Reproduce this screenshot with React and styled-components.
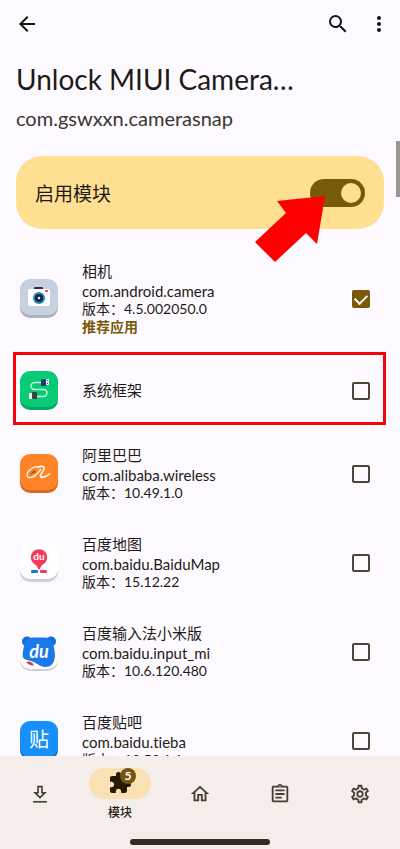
import styled, { createGlobalStyle } from "styled-components";
import {
  MdArrowBack,
  MdExtension,
  MdMoreVert,
  MdOutlineAssignment,
  MdOutlineHome,
  MdOutlineSettings,
  MdSearch,
} from "react-icons/md";

const App = () => {
  return (
    <>
      <GlobalStyle />
      <Screen>
        <TopBar>
          <IconButton aria-label="返回">
            <MdArrowBack />
          </IconButton>
          <Actions>
            <IconButton aria-label="搜索">
              <MdSearch />
            </IconButton>
            <IconButton aria-label="更多">
              <MdMoreVert />
            </IconButton>
          </Actions>
        </TopBar>

        <Heading>
          <Title>Unlock MIUI Camera…</Title>
          <PackageName>com.gswxxn.camerasnap</PackageName>
        </Heading>

        <EnableCard>
          <EnableText>启用模块</EnableText>
          <Toggle type="checkbox" role="switch" defaultChecked />
          <Pointer viewBox="0 0 72 68" aria-hidden="true">
            <path d="M22 6 L70 1 L62 49 L51 38 L20 67 L0 47 L31 18 Z" />
          </Pointer>
        </EnableCard>

        <AppList>
          {apps.map(({ name, id, version, recommended, marked, Icon }) => (
            <Row key={name}>
              <AppIcon viewBox="0 1 40 40" aria-hidden="true">
                <Icon />
              </AppIcon>
              <Info>
                <AppName>{name}</AppName>
                {id && <PackageId>{id}</PackageId>}
                {version && <Detail>版本：{version}</Detail>}
                {recommended && <Recommended>推荐应用</Recommended>}
              </Info>
              <Checkbox type="checkbox" defaultChecked={recommended} />
              {marked && <Marker />}
            </Row>
          ))}
        </AppList>
        <ScrollThumb />

        <BottomNav>
          <Tabs>
            <Tab href="#download" aria-label="下载">
              <DownloadIcon />
            </Tab>
            <Tab href="#modules" aria-current="page">
              <Pill>
                <MdExtension />
                <Badge>5</Badge>
              </Pill>
              <TabLabel>模块</TabLabel>
            </Tab>
            <Tab href="#home" aria-label="主页">
              <MdOutlineHome />
            </Tab>
            <Tab href="#logs" aria-label="日志">
              <MdOutlineAssignment />
            </Tab>
            <Tab href="#settings" aria-label="设置">
              <MdOutlineSettings />
            </Tab>
          </Tabs>
          <HomeIndicator />
        </BottomNav>
      </Screen>
    </>
  );
};

const DownloadIcon = () => (
  <svg viewBox="0 0 24 24" fill="none" stroke="currentColor" strokeWidth="1.8">
    <path d="M9.900 4h4.200v6.600h3.200L12 15.800l-5.300-5.200h3.200z" />
    <path d="M4.500 20.500h15" />
  </svg>
);

const CameraIcon = () => (
  <>
    <rect x="1" y="2" width="38" height="38" rx="10" fill="#a9b4c6" />
    <rect x="1" y="1" width="38" height="36" rx="10" fill="#c6d0df" />
    <rect x="15" y="9" width="9" height="4" rx="1" fill="#27303f" />
    <rect x="9" y="11" width="22" height="17" rx="2" fill="#fff" />
    <rect x="26" y="12" width="3" height="2" rx="1" fill="#e5323e" />
    <circle cx="20" cy="20" r="6" fill="#1c8cc6" />
    <circle cx="20" cy="20" r="4" fill="#1d2633" />
    <circle cx="20" cy="20" r="1.3" fill="#d9eef5" />
  </>
);

const FrameworkIcon = () => (
  <>
    <rect x="1" y="2" width="38" height="38" rx="10" fill="#05a860" />
    <rect x="1" y="1" width="38" height="36" rx="10" fill="#0acb75" />
    <path
      d="M23 12.500h-7.500a3.500 3.500 0 0 0 0 7h9a3.500 3.500 0 0 1 0 7H17"
      fill="none"
      stroke="#c9f5dc"
      strokeWidth="1.4"
    />
    <rect x="22" y="9" width="5" height="7" rx="1" fill="#153f78" />
    <rect x="27" y="9" width="3" height="6" fill="#e3ebf2" />
    <rect x="28" y="10" width="1" height="1" fill="#456" />
    <rect x="28" y="13" width="1" height="1" fill="#456" />
    <rect x="10" y="23" width="4" height="6" fill="#e8eee9" />
    <rect x="13" y="22" width="5" height="7" rx="1" fill="#3d4047" />
  </>
);

const AlibabaIcon = () => (
  <>
    <rect x="1" y="2" width="38" height="38" rx="10" fill="#dc6a1b" />
    <rect x="1" y="1" width="38" height="36" rx="10" fill="#ff8429" />
    <path
      d="M12.500 21.500c.5-2 1.500-3 3-4m-2 2 3-.8"
      fill="none"
      stroke="#6b3d16"
      strokeWidth=".9"
    />
    <g fill="none" stroke="#fff4e4" strokeLinecap="round" strokeLinejoin="round">
      <path
        d="M21 14c-5-1.500-10 1.500-12.500 6-1.500 3.500.5 5.500 4.500 4.200 3.500-1.200 6-4 8.500-7.700"
        strokeWidth="1.400"
      />
      <path
        d="M18.500 14c4.500-1.500 7.500-.6 6.200 2.500-1.200 2.800-4 5.200-3 7.200 1 1.600 5.500-.2 9-2.700"
        strokeWidth="1.700"
      />
    </g>
  </>
);

const MapIcon = () => (
  <>
    <rect x="1" y="2" width="38" height="38" rx="10" fill="#cfd1d8" />
    <rect x="1" y="1" width="38" height="36" rx="10" fill="#fff" />
    <rect x="12" y="28" width="7" height="3" rx="1" fill="#1878dc" />
    <rect x="21" y="28" width="7" height="3" rx="1" fill="#ee3e5c" />
    <path d="M20 28l-3-5a8.200 8.200 0 1 1 6 0z" fill="#f8385a" />
    <IconText x="20" y="18" fontSize="10">
      du
    </IconText>
  </>
);

const InputIcon = () => (
  <>
    <path d="M1 23v7a10 10 0 0 0 10 10h18a10 10 0 0 0 10-10v-7z" fill="#cfd1d8" />
    <path d="M1 20v8a10 10 0 0 0 10 10h18a10 10 0 0 0 10-10v-8z" fill="#fff" />
    <circle cx="8" cy="10.500" r="5" fill="#126ee0" />
    <circle cx="32" cy="10.500" r="5" fill="#126ee0" />
    <path
      d="M14 6.500h12c5 0 7.500 3 8.500 7.500 1 5 2 10 1 14-1 5-4 8-9 8-5 0-7-3-12-5-5-2-9-2-10.500-4.500-1-4 .5-9 1.500-13.500C6.500 9.500 9 6.500 14 6.500z"
      fill="#1a7aeb"
    />
    <path d="M7 31c3-1.500 6.500 0 8 3.500-3 .5-6-1-8-3.500z" fill="#e23948" />
    <IconText x="20" y="27" fontSize="18" fontStyle="italic">
      du
    </IconText>
  </>
);

const TiebaIcon = () => (
  <>
    <rect x="1" y="2" width="38" height="38" rx="10" fill="#0d70d2" />
    <rect x="1" y="1" width="38" height="36" rx="10" fill="#1890fb" />
    <IconText x="20" y="27" fontSize="20" $weight={400}>
      贴
    </IconText>
  </>
);

const apps = [
  {
    name: "相机",
    id: "com.android.camera",
    version: "4.5.002050.0",
    recommended: true,
    Icon: CameraIcon,
  },
  { name: "系统框架", marked: true, Icon: FrameworkIcon },
  {
    name: "阿里巴巴",
    id: "com.alibaba.wireless",
    version: "10.49.1.0",
    Icon: AlibabaIcon,
  },
  {
    name: "百度地图",
    id: "com.baidu.BaiduMap",
    version: "15.12.22",
    Icon: MapIcon,
  },
  {
    name: "百度输入法小米版",
    id: "com.baidu.input_mi",
    version: "10.6.120.480",
    Icon: InputIcon,
  },
  {
    name: "百度贴吧",
    id: "com.baidu.tieba",
    version: "12.52.1.1",
    Icon: TiebaIcon,
  },
];

const GlobalStyle = createGlobalStyle`
  * {
    box-sizing: border-box;
  }

  body {
    margin: 0;
    background: #fdfaff;
    color: #1d1b18;
    font-family: Lato, "Noto Sans CJK SC", sans-serif;
    font-variant-ligatures: none;
  }
`;

const Screen = styled.div`
  position: relative;
  display: flex;
  flex-direction: column;
  height: 100vh;
  overflow: hidden;
`;

const TopBar = styled.header`
  display: flex;
  flex: none;
  align-items: center;
  justify-content: space-between;
  height: 48px;
  padding: 0 9px 0 15px;
`;

const Actions = styled.div`
  display: flex;
  gap: 17px;
`;

const IconButton = styled.button`
  display: flex;
  padding: 0;
  border: 0;
  background: none;
  color: #16140f;
  font-size: 24px;
`;

const Heading = styled.div`
  flex: none;
  padding: 11px 16px 0;
`;

const Title = styled.h1`
  margin: 0;
  overflow: hidden;
  font-size: 28px;
  font-weight: 400;
  line-height: 40px;
  text-overflow: ellipsis;
  white-space: nowrap;
`;

const PackageName = styled.p`
  margin: 6px 0 0;
  color: #3a362f;
  font-size: 20px;
  line-height: 26px;
`;

const EnableCard = styled.label`
  position: relative;
  z-index: 1;
  display: flex;
  flex: none;
  align-items: center;
  justify-content: space-between;
  height: 73px;
  margin: 25px 16px 16px;
  padding: 0 19px;
  border-radius: 26px;
  background: #ffdf91;
`;

const EnableText = styled.span`
  font-size: 19px;
`;

const Toggle = styled.input`
  display: flex;
  align-items: center;
  width: 55px;
  height: 28px;
  margin: 0;
  padding: 0 4px;
  border-radius: 14px;
  background: #785a08;
  appearance: none;

  &::after {
    content: "";
    width: 20px;
    height: 20px;
    border-radius: 50%;
    background: #ffdf91;
  }

  &:checked {
    justify-content: flex-end;
  }
`;

const Pointer = styled.svg`
  position: absolute;
  top: 39px;
  right: 57px;
  width: 72px;
  height: 68px;
  fill: #ff0000;
  pointer-events: none;
`;

const AppList = styled.main`
  flex: 1;
  min-height: 0;
  overflow-y: auto;
  scrollbar-width: none;
`;

const Row = styled.label`
  position: relative;
  display: flex;
  align-items: center;
  gap: 23px;
  min-height: 77px;
  padding: 15px 30px 14px 19px;
`;

const AppIcon = styled.svg`
  flex: none;
  width: 40px;
  height: 40px;
`;

const IconText = styled.text`
  fill: #fff;
  font-weight: ${({ $weight }) => $weight || 700};
  text-anchor: middle;
`;

const Info = styled.div`
  flex: 1;
  min-width: 0;
  padding-bottom: 2px;
`;

const AppName = styled.div`
  font-size: 15px;
  line-height: 22px;
`;

const Detail = styled.div`
  font-size: 14px;
  line-height: 18px;
`;

const PackageId = styled(Detail)`
  font-size: 15px;
`;

const Recommended = styled(Detail)`
  color: #785a08;
  font-weight: 700;
`;

const Checkbox = styled.input`
  display: flex;
  align-items: flex-start;
  justify-content: center;
  flex: none;
  width: 18px;
  height: 18px;
  margin: 0;
  border: 2px solid #4a4638;
  border-radius: 2px;
  appearance: none;

  &:checked {
    border-color: #785a08;
    background: #785a08;
  }

  &:checked::after {
    content: "";
    width: 6px;
    height: 10px;
    border: solid #fff;
    border-width: 0 2px 2px 0;
    transform: rotate(45deg);
  }
`;

const Marker = styled.span`
  position: absolute;
  inset: 0 14px 4px 13px;
  border: 3px solid #f20509;
  pointer-events: none;
`;

const ScrollThumb = styled.div`
  position: absolute;
  top: 141px;
  right: 0;
  width: 4px;
  height: 56px;
  background: #9b9893;
`;

const BottomNav = styled.nav`
  flex: none;
  padding-bottom: 4px;
  background: #f5ede9;
`;

const Tabs = styled.div`
  display: flex;
  height: 76px;
  margin-bottom: 7px;
`;

const Tab = styled.a`
  display: flex;
  flex: 1;
  flex-direction: column;
  align-items: center;
  justify-content: center;
  gap: 6px;
  color: #453e32;
  text-decoration: none;

  svg {
    width: 22px;
    height: 22px;
  }
`;

const Pill = styled.span`
  position: relative;
  display: flex;
  align-items: center;
  justify-content: center;
  width: 62px;
  height: 31px;
  border-radius: 16px;
  background: #fae1b3;
  color: #261a04;

  svg {
    width: 24px;
    height: 24px;
  }
`;

const Badge = styled.span`
  position: absolute;
  top: 0;
  right: 15px;
  width: 16px;
  height: 16px;
  border-radius: 50%;
  background: #735410;
  color: #fff;
  font-size: 12px;
  font-weight: 700;
  line-height: 16px;
  text-align: center;
`;

const TabLabel = styled.span`
  color: #1d1b18;
  font-size: 12px;
  font-weight: 500;
  line-height: 16px;
`;

const HomeIndicator = styled.div`
  width: 35%;
  height: 6px;
  margin: 0 auto;
  border-radius: 3px;
  background: #302d27;
`;

export default App;
